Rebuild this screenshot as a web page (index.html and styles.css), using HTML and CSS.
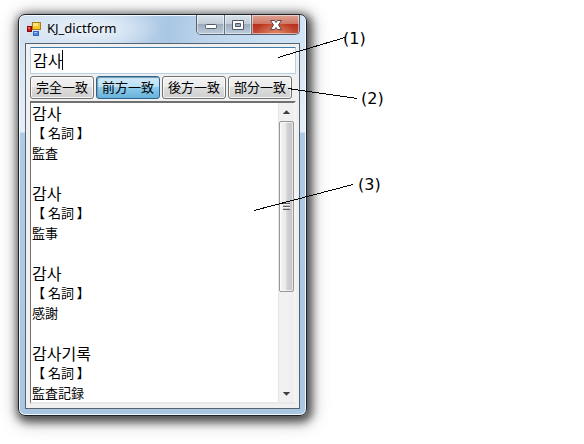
FILE: index.html
```
<!DOCTYPE html>
<html lang="ja">
<head>
<meta charset="utf-8">
<title>KJ_dictform</title>
<link rel="stylesheet" href="styles.css">
</head>
<body>
<main class="scene">
  <section class="window">
    <header class="titlebar">
      <svg class="app-icon" viewBox="0 0 14 14" aria-hidden="true">
        <path d="M0 0h6v4H0zM0 11h5v3H0z" fill="#d9dde3"/>
        <rect x="0.5" y="4.5" width="4" height="5" fill="#c81818" stroke="#850b0b"/>
        <rect x="1" y="5" width="2" height="2" fill="#f06a50"/>
        <rect x="5.500" y="0.500" width="8" height="7" fill="#f9c62c" stroke="#a87d16"/>
        <rect x="6" y="1" width="5" height="3" fill="#ffe58a"/>
        <rect x="6.500" y="9.500" width="5" height="4" fill="#4f8ae8" stroke="#3565b8"/>
        <rect x="7" y="10" width="3" height="1" fill="#a9cbff"/>
      </svg>
      <h1 class="title">KJ_dictform</h1>
      <div class="caption">
        <button class="cap cap-min" type="button" aria-label="最小化">
          <svg viewBox="0 0 14 12"><rect x="1.500" y="5.500" width="11" height="4" rx="1" fill="#fff" stroke="#525866"/></svg>
        </button>
        <button class="cap cap-max" type="button" aria-label="最大化">
          <svg viewBox="0 0 14 12"><path fill-rule="evenodd" d="M1.500 1.500h11v9h-11zM4.500 4.500h5v3h-5z" fill="#fff" stroke="#525866"/></svg>
        </button>
        <button class="cap cap-close" type="button" aria-label="閉じる">
          <svg viewBox="0 0 14 12"><path d="M1.500 1.500h4L7 3.500l1.500-2h4L9.500 6l3 4.500h-4L7 8.500l-1.500 2h-4l3-4.500z" fill="#fff" stroke="#5c4650"/></svg>
        </button>
      </div>
    </header>
    <div class="client">
      <div class="field">
        <input class="search" type="text" value="감사" aria-label="検索語" lang="ko">
        <span class="caret"></span>
      </div>
      <div class="modes">
        <button class="mode" type="button">完全一致</button>
        <button class="mode mode-active" type="button">前方一致</button>
        <button class="mode" type="button">後方一致</button>
        <button class="mode" type="button">部分一致</button>
      </div>
      <div class="results">
        <div class="entries">
          <article class="entry"><h2 lang="ko">감사</h2><p>【 名詞 】</p><p>監査</p></article>
          <article class="entry"><h2 lang="ko">감사</h2><p>【 名詞 】</p><p>監事</p></article>
          <article class="entry"><h2 lang="ko">감사</h2><p>【 名詞 】</p><p>感謝</p></article>
          <article class="entry"><h2 lang="ko">감사기록</h2><p>【 名詞 】</p><p>監査記録</p></article>
        </div>
        <div class="scrollbar">
          <svg class="arrow" viewBox="0 0 16 18" aria-hidden="true"><path d="M4 11l4-4 4 4z" fill="#404040"/></svg>
          <div class="track"><div class="thumb"><span class="grip"></span></div></div>
          <svg class="arrow" viewBox="0 0 16 18" aria-hidden="true"><path d="M4 8h8l-4 4z" fill="#404040"/></svg>
        </div>
      </div>
    </div>
  </section>
  <div class="callouts">
    <svg class="leaders" viewBox="0 0 120 220" aria-hidden="true">
      <path d="M24 57.500L91 37.500M34 88.500L103 98.500M0 210.500L99 184.500" fill="none" stroke="#000" shape-rendering="crispEdges"/>
    </svg>
    <span class="label label-1">(1)</span>
    <span class="label label-2">(2)</span>
    <span class="label label-3">(3)</span>
  </div>
</main>
</body>
</html>
```
FILE: styles.css
```
* { box-sizing: border-box; }

body {
  margin: 0;
  background: #fff;
  color: #000;
  font: 13px/20px "Noto Sans CJK JP", sans-serif;
}

h1, h2, p { margin: 0; font-weight: 400; }

button, input { margin: 0; padding: 0; font: inherit; color: inherit; }

.scene {
  position: relative;
  display: grid;
  grid-template-columns: minmax(0, 1fr) 277px;
  height: 100vh;
  min-height: 300px;
  padding: 14px 0 28px 18px;
  overflow: hidden;
}

.window {
  display: flex;
  flex-direction: column;
  min-height: 0;
  padding: 0 6px 6px;
  border: 1px solid #1c222a;
  border-radius: 7px;
  background:
    radial-gradient(ellipse 75px 22px at 68px 14px, rgba(240, 246, 252, .9), transparent),
    linear-gradient(100deg, #d3e2f1 0, #c5d9ed 35%, #a9c6e3 52%, #bcd5ec 65%, #d2e5f6 100%) 0 0 / 100% 29px no-repeat,
    linear-gradient(#cfe0f1 0, #e6eff8 117px, #adcae6 118px, #a9c7e3 100%);
  box-shadow: inset 0 0 0 1px rgba(255, 255, 255, .85), 2px 3px 8px 3px rgba(0, 0, 0, .6), 2px 3px 18px 3px rgba(0, 0, 0, .3);
}

.titlebar {
  display: flex;
  flex: none;
  height: 28px;
  padding-left: 2px;
}

.app-icon { width: 14px; height: 14px; margin: 7px 6px 0 0; }

.title {
  flex: 1;
  font: 13px/26px "Noto Sans", sans-serif;
}

.caption {
  display: flex;
  height: 20px;
  border: 1px solid #566170;
  border-top: 0;
  border-radius: 0 0 5px 5px;
  overflow: hidden;
}

.cap {
  display: flex;
  align-items: center;
  justify-content: center;
  width: 27px;
  border: 0;
  border-right: 1px solid #66727f;
  background: linear-gradient(#dbe3ea 0, #c3ced9 45%, #9cacbd 50%, #bdcddd 100%);
  box-shadow: inset 0 0 0 1px rgba(255, 255, 255, .5);
}

.cap-min { width: 28px; }

.cap-close {
  width: 47px;
  border-right: 0;
  background: radial-gradient(ellipse at 50% 110%, #e48a63, transparent 60%), linear-gradient(#dfa294 0, #cf7866 45%, #b8301c 50%, #c3513c 100%);
}

.cap svg { width: 14px; height: 12px; }

.client {
  display: flex;
  flex: 1;
  flex-direction: column;
  gap: 2px;
  min-height: 0;
  padding: 3px 3px 4px 4px;
  border: 1px solid #56626f;
  background: #f0f0f0;
}

.field { position: relative; flex: none; }

.search {
  display: block;
  width: 100%;
  height: 27px;
  padding: 0 2px 2px;
  border: 1px solid #b5cfe7;
  border-top-color: #3d7bad;
  border-radius: 1px;
  outline: 0;
  background: #fff;
  font: 16px/22px "Noto Sans CJK KR", sans-serif;
}

.caret {
  position: absolute;
  top: 3px;
  left: 32px;
  width: 1px;
  height: 20px;
  background: #000;
}

.modes {
  display: grid;
  flex: none;
  grid-template-columns: repeat(4, 1fr);
  gap: 2px;
  padding-right: 4px;
}

.mode {
  height: 23px;
  padding-bottom: 2px;
  border: 1px solid #707070;
  border-radius: 3px;
  background: linear-gradient(#f2f2f2 0, #ebebeb 48%, #dddddd 50%, #cfcfcf 100%);
  box-shadow: inset 0 0 0 1px rgba(255, 255, 255, .8);
  line-height: 19px;
  white-space: nowrap;
}

.mode-active {
  border-color: #2c628b;
  background: linear-gradient(#d5ebf8 0, #b8dff4 48%, #8ccaec 50%, #68b3db 100%);
  box-shadow: inset 1px 1px 1px #7199b3;
}

.results {
  display: flex;
  flex: 1;
  min-height: 0;
  border: 2px solid;
  border-color: #707070 #f4f4f4 #e8e8e8 #707070;
  border-width: 2px 2px 2px 1px;
  background: #fff;
  overflow: hidden;
}

.entries { flex: 1; padding: 1px 1px 0; }

.entry { height: 80px; }

.entry h2 { font: 16px/19px "Noto Sans CJK KR", sans-serif; }

.scrollbar {
  display: flex;
  flex-direction: column;
  width: 16px;
  background: #f0f0f0;
  border-left: 1px solid #e6e6e6;
}

.arrow { flex: none; width: 100%; height: 18px; }

.track { flex: 1; min-height: 0; }

.thumb {
  display: flex;
  align-items: center;
  justify-content: center;
  height: 65%;
  border: 1px solid #979797;
  border-radius: 2px;
  background: linear-gradient(90deg, #f5f5f5 0, #e8e8ea 45%, #d2d2d6 55%, #c2c2c7 100%);
  box-shadow: inset 0 0 0 1px rgba(255, 255, 255, .6);
}

.grip {
  width: 7px;
  height: 7px;
  background: repeating-linear-gradient(#606060 0, #606060 1px, #f4f4f4 1px, #f4f4f4 2px, #c8c8cc 2px, #c8c8cc 3px);
}

.callouts {
  position: absolute;
  top: 0;
  right: 0;
  width: 330px;
  height: 220px;
  pointer-events: none;
}

.leaders { width: 120px; height: 220px; }

.label {
  position: absolute;
  font: 16px/20px "DejaVu Sans", sans-serif;
}

.label-1 { top: 29px; left: 89px; }
.label-2 { top: 89px; left: 107px; }
.label-3 { top: 175px; left: 104px; }
```
